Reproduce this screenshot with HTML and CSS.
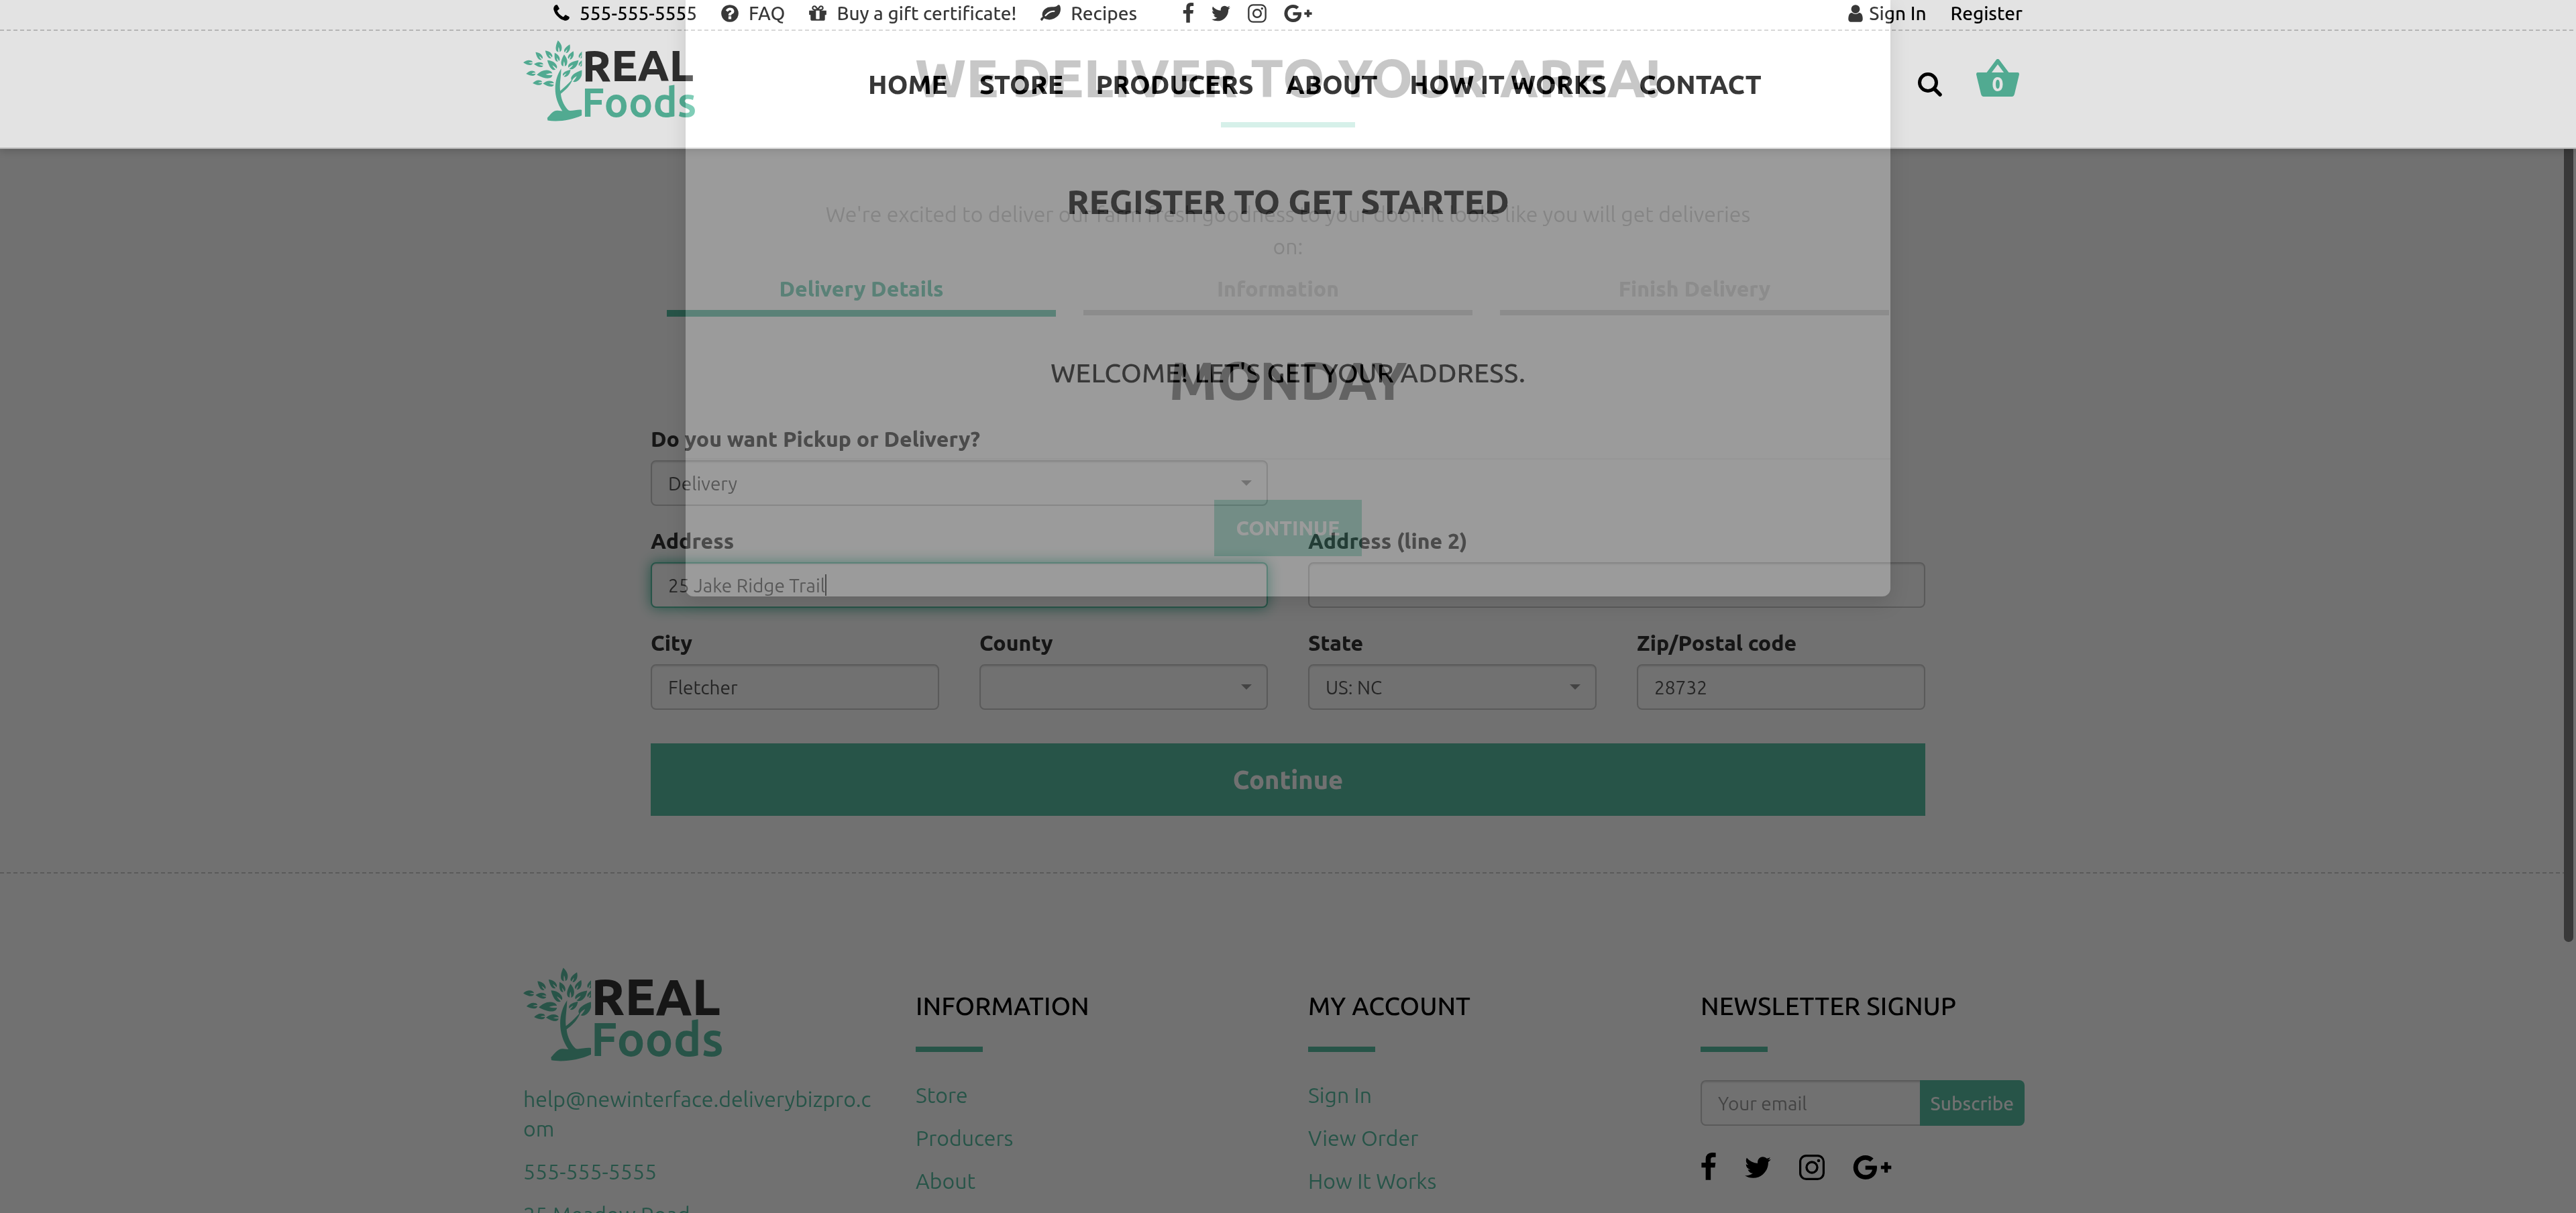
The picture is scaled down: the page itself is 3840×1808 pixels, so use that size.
FILE: index.html
```html
<!DOCTYPE html>
<html lang="en">
<head>
<meta charset="utf-8">
<meta name="viewport" content="width=device-width, initial-scale=1">
<title>Register - Real Foods</title>
<link rel="stylesheet" href="styles.css">
</head>
<body>
<svg class="sprite" aria-hidden="true">
  <defs>
    <path id="leaf-shape" d="M0-30C14-14 21 4 13 22C10 27 7 29 3 30C4 21 3 13 0 4C-3 13-4 21-3 30C-19 27-20 4 0-30Z"/>
    <clipPath id="tree-clip"><rect x="0" y="0" width="315" height="450"/></clipPath>
    <symbol id="logo" viewBox="12 16 888 420">
      <g class="logo-green" clip-path="url(#tree-clip)">
        <use href="#leaf-shape" transform="translate(194 47) rotate(-6)"/>
        <use href="#leaf-shape" transform="translate(241 59) rotate(28) scale(.8)"/>
        <use href="#leaf-shape" transform="translate(92 96) rotate(-42) scale(.82)"/>
        <use href="#leaf-shape" transform="translate(142 88) rotate(-42) scale(.82)"/>
        <use href="#leaf-shape" transform="translate(184 103) rotate(-24) scale(.8)"/>
        <use href="#leaf-shape" transform="translate(260 93) rotate(28) scale(.78)"/>
        <use href="#leaf-shape" transform="translate(223 120) scale(1.02)"/>
        <use href="#leaf-shape" transform="translate(36 132) rotate(-88) scale(.8)"/>
        <use href="#leaf-shape" transform="translate(91 142) rotate(-84) scale(.8)"/>
        <use href="#leaf-shape" transform="translate(159 142) rotate(-45) scale(1.08)"/>
        <use href="#leaf-shape" transform="translate(273 140) rotate(50) scale(1.08)"/>
        <use href="#leaf-shape" transform="translate(51 188) rotate(-94) scale(.82)"/>
        <use href="#leaf-shape" transform="translate(122 193) rotate(-92) scale(1.35)"/>
        <use href="#leaf-shape" transform="translate(238 185) rotate(48) scale(.82)"/>
        <use href="#leaf-shape" transform="translate(292 198) rotate(42) scale(1.3)"/>
        <use href="#leaf-shape" transform="translate(85 236) rotate(-94) scale(.82)"/>
        <use href="#leaf-shape" transform="translate(142 241) rotate(-88) scale(.95)"/>
        <use href="#leaf-shape" transform="translate(314 88) rotate(24) scale(.75)"/>
        <use href="#leaf-shape" transform="translate(314 132) rotate(30) scale(.7)"/>
        <path d="M136 418C152 402 166 378 190 380L214 382C164 310 168 222 208 163C208 205 198 240 203 278C226 260 246 240 268 216C256 252 228 276 206 293C208 325 226 362 248 380C272 382 298 372 315 377V405C262 430 190 440 138 431Z"/>
      </g>
      <text class="logo-real" x="316" y="229">REAL</text>
      <text class="logo-foods" x="314" y="411">Foods</text>
    </symbol>
    <symbol id="facebook" viewBox="479 0 864 1792"><path d="M1343 12v264h-157q-86 0-116 36t-30 108v189h293l-39 296h-254v759h-306v-759h-255v-296h255v-218q0-186 104-288.5t277-102.5q147 0 228 12z"/></symbol>
    <symbol id="twitter" viewBox="108 0 1576 1792"><path d="M1684 408q-67 98-162 167 1 14 1 42 0 130-38 259.5t-115.5 248.5-184.5 210.5-258 146-323 54.5q-271 0-496-145 35 4 78 4 225 0 401-138-105-2-188-64.5t-114-159.5q33 5 61 5 43 0 85-11-112-23-185.5-111.5t-73.5-205.5v-4q68 38 146 41-66-44-105-115t-39-154q0-88 44-163 121 149 294.5 238.5t371.5 99.5q-8-38-8-74 0-134 94.5-228.5t228.5-94.5q140 0 236 102 109-21 205-78-37 115-142 178 93-10 186-50z"/></symbol>
    <symbol id="instagram" viewBox="0 0 38 44"><rect x="1.600" y="4.600" width="34.800" height="34.800" rx="9" fill="none" stroke="currentColor" stroke-width="3.200"/><circle cx="19" cy="22" r="8" fill="none" stroke="currentColor" stroke-width="3.400"/><circle cx="29" cy="12" r="2.300"/></symbol>
    <symbol id="google-plus" viewBox="0 0 2304 1792"><path d="M1437 913q0 208-87 370.5t-248 254-369 91.5q-149 0-285-58t-234-156-156-234-58-285 58-285 156-234 234-156 285-58q286 0 491 192l-199 191q-117-113-292-113-123 0-227.500 62t-165.500 168.500-61 232.500 61 232.500 165.500 168.500 227.500 62q83 0 152.500-23t114.500-57.500 78.500-78.500 49-83 21.500-74h-416v-252h692q12 63 12 122zm867-122v210h-209v209h-210v-209h-209v-210h209v-209h210v209h209z"/></symbol>
  </defs>
</svg>

<div class="page">
  <main class="register">
    <h1>REGISTER TO GET STARTED</h1>
    <ol class="steps">
      <li class="active">Delivery Details</li>
      <li>Information</li>
      <li>Finish Delivery</li>
    </ol>
    <h2>WELCOME! LET'S GET YOUR ADDRESS.</h2>
    <form class="address-form">
      <div class="field half">
        <label for="method">Do you want Pickup or Delivery?</label>
        <div class="select-box"><select id="method"><option>Delivery</option><option>Pickup</option></select></div>
      </div>
      <div class="field half first">
        <label for="address">Address</label>
        <div class="input-box"><input id="address" class="focused" type="text" value="25 Jake Ridge Trail"><span class="text-cursor"></span></div>
      </div>
      <div class="field half">
        <label for="address2">Address (line 2)</label>
        <input id="address2" type="text">
      </div>
      <div class="field">
        <label for="city">City</label>
        <input id="city" type="text" value="Fletcher">
      </div>
      <div class="field">
        <label for="county">County</label>
        <div class="select-box"><select id="county"><option></option></select></div>
      </div>
      <div class="field">
        <label for="state">State</label>
        <div class="select-box"><select id="state"><option>US: NC</option></select></div>
      </div>
      <div class="field">
        <label for="zip">Zip/Postal code</label>
        <input id="zip" type="text" value="28732">
      </div>
      <button class="continue" type="submit">Continue</button>
    </form>
  </main>

  <footer class="site-footer">
    <div class="dashes"></div>
    <div class="container footer-columns">
      <section>
        <svg class="footer-logo" role="img" aria-label="Real Foods"><use href="#logo"/></svg>
        <p><a href="#">help@newinterface.deliverybizpro.com</a></p>
        <p><a href="#">555-555-5555</a></p>
        <p><a href="#">25 Meadow Road</a></p>
      </section>
      <section>
        <h3>INFORMATION</h3>
        <ul class="links">
          <li><a href="#">Store</a></li>
          <li><a href="#">Producers</a></li>
          <li><a href="#">About</a></li>
        </ul>
      </section>
      <section>
        <h3>MY ACCOUNT</h3>
        <ul class="links">
          <li><a href="#">Sign In</a></li>
          <li><a href="#">View Order</a></li>
          <li><a href="#">How It Works</a></li>
        </ul>
      </section>
      <section>
        <h3>NEWSLETTER SIGNUP</h3>
        <form class="newsletter">
          <input type="email" placeholder="Your email" aria-label="Your email">
          <button type="submit">Subscribe</button>
        </form>
        <div class="social large">
          <a href="#" aria-label="Facebook"><svg class="fb"><use href="#facebook"/></svg></a>
          <a href="#" aria-label="Twitter"><svg class="tw"><use href="#twitter"/></svg></a>
          <a href="#" aria-label="Instagram"><svg class="ig"><use href="#instagram"/></svg></a>
          <a href="#" aria-label="Google Plus"><svg class="gp"><use href="#google-plus"/></svg></a>
        </div>
      </section>
    </div>
  </footer>
</div>
<div class="page-dim"></div>
<div class="scrollbar"></div>

<header class="site-header">
  <div class="container top-bar">
    <a href="#"><svg width="24" height="30" viewBox="192 0 1408 1792"><path d="M1600 1240q0 27-10 70.5t-21 68.5q-21 50-122 106-94 51-186 51-27 0-53-3.5t-57.5-12.5-47-14.5-55.5-20.5-49-18q-98-35-175-83-127-79-264-216t-216-264q-48-77-83-175-3-9-18-49t-20.5-55.5-14.5-47-12.5-57.5-3.5-53q0-92 51-186 56-101 106-122 25-11 68.5-21t70.5-10q14 0 21 3 18 6 53 76 11 19 30 54t35 63.5 31 53.5q3 4 17.5 25t21.5 35.5 7 28.5q0 20-28.5 50t-62 55-62 53-28.5 46q0 9 5 22.5t8.5 20.5 14 24 11.5 19q76 137 174 235t235 174q2 1 19 11.5t24 14 20.5 8.5 22.5 5q18 0 46-28.5t53-62 55-62 50-28.5q14 0 28.5 7t35.5 21.5 25 17.5q25 15 53.5 31t63.5 35 54 30q70 35 76 53 3 7 3 21z"/></svg>555-555-5555</a>
    <a href="#"><svg width="26" height="30" viewBox="128 0 1536 1792"><path d="M1024 1376v-192q0-14-9-23t-23-9h-192q-14 0-23 9t-9 23v192q0 14 9 23t23 9h192q14 0 23-9t9-23zm256-672q0-88-55.5-163t-138.5-116-170-41q-243 0-371 213-15 24 8 42l132 100q7 6 19 6 16 0 25-12 53-68 86-92 34-24 86-24 48 0 85.5 26t37.5 59q0 38-20 61t-68 45q-63 28-115.5 86.5t-52.5 125.5v36q0 14 9 23t23 9h192q14 0 23-9t9-23q0-19 21.5-49.5t54.5-49.5q32-18 49-28.5t46-35 44.5-48 28-60.5 12.5-81zm384 192q0 209-103 385.5t-279.5 279.5-385.5 103-385.5-103-279.5-279.5-103-385.5 103-385.5 279.5-279.5 385.5-103 385.5 103 279.5 279.5 103 385.5z"/></svg>FAQ</a>
    <a href="#"><svg width="26" height="30" viewBox="128 0 1536 1792"><path d="M1056 1356v-716h-320v716q0 25 18 38.5t46 13.5h192q28 0 46-13.5t18-38.5zm-456-844h195l-126-161q-26-31-69-31-40 0-68 28t-28 68 28 68 68 28zm688-96q0-40-28-68t-68-28q-43 0-69 31l-125 161h194q40 0 68-28t28-68zm376 256v320q0 14-9 23t-23 9h-96v416q0 40-28 68t-68 28h-1088q-40 0-68-28t-28-68v-416h-96q-14 0-23-9t-9-23v-320q0-14 9-23t23-9h440q-93 0-158.5-65.5t-65.5-158.5 65.5-158.5 158.5-65.5q107 0 168 77l128 165 128-165q61-77 168-77 93 0 158.5 65.5t65.5 158.5-65.5 158.5-158.5 65.5h440q14 0 23 9t9 23z"/></svg>Buy a gift certificate!</a>
    <a href="#"><svg width="30" height="30" viewBox="0 0 1792 1792"><path d="M1280 704q0-26-19-45t-45-19q-172 0-318 49.5t-259.5 134-235.5 219.5q-19 21-19 45 0 26 19 45t45 19q24 0 45-19 27-24 74-71t67-66q137-124 268.5-176t313.5-52q26 0 45-19t19-45zm512-198q0 95-20 193-46 224-184.5 383t-357.5 268q-214 108-438 108-148 0-286-47-15-5-88-42t-96-37q-16 0-39.5 32t-45 70-52.5 70-60 32q-43 0-63.5-17.5t-45.5-59.5q-2-4-6-11t-5.5-10-3-9.500-1.500-13.500q0-35 31-73.500t68-65.500 68-56 31-48q0-4-14-38t-16-44q-9-51-9-104 0-115 43.500-220t119-184.500 170.500-139 204-95.500q55-18 145-25.500t179.500-9 178.500-6 163.500-24 113.500-56.500l29.500-29.500 29.500-28 27-20 36.500-16 43.500-4.500q39 0 70.500 46t47.500 112 24 124 8 96z"/></svg>Recipes</a>
    <div class="social small">
      <a href="#" aria-label="Facebook"><svg class="fb"><use href="#facebook"/></svg></a>
      <a href="#" aria-label="Twitter"><svg class="tw"><use href="#twitter"/></svg></a>
      <a href="#" aria-label="Instagram"><svg class="ig"><use href="#instagram"/></svg></a>
      <a href="#" aria-label="Google Plus"><svg class="gp"><use href="#google-plus"/></svg></a>
    </div>
    <a class="sign-in" href="#"><svg width="22" height="30" viewBox="256 0 1280 1792"><path d="M1536 1399q0 109-62.5 187t-150.5 78h-854q-88 0-150.5-78t-62.5-187q0-85 8.500-160.500t31.500-152 58.500-131 94-89 134.500-34.500q131 128 313 128t313-128q76 0 134.500 34.500t94 89 58.500 131 31.500 152 8.500 160.500zm-256-887q0 159-112.500 271.500t-271.500 112.500-271.500-112.500-112.500-271.500 112.500-271.500 271.500-112.500 271.500 112.500 112.500 271.500z"/></svg>Sign In</a>
    <a href="#">Register</a>
  </div>
  <div class="dashes"></div>
  <div class="container main-bar">
    <a href="#" aria-label="Real Foods"><svg class="header-logo"><use href="#logo"/></svg></a>
    <nav class="main-nav">
      <a href="#">HOME</a>
      <a href="#">STORE</a>
      <a href="#">PRODUCERS</a>
      <a href="#">ABOUT</a>
      <a href="#">HOW IT WORKS</a>
      <a href="#">CONTACT</a>
    </nav>
    <button class="search" type="button" aria-label="Search"><svg width="36" height="36" viewBox="0 0 36 36"><g fill="none" stroke="currentColor"><circle cx="15" cy="15" r="12.500" stroke-width="5"/><path d="M25 25l8 8" stroke-width="5.500" stroke-linecap="round"/></g></svg></button>
    <a class="basket" href="#" aria-label="Basket"><svg width="64" height="56" viewBox="0 0 64 56"><path d="M17 23L32 3L47 23" fill="none" stroke="currentColor" stroke-width="6" stroke-linejoin="round"/><path d="M2 20H62Q64 20 64 23L57 52Q56 56 53 56H11Q8 56 7 52L0 23Q0 20 2 20Z"/><text x="32" y="48">0</text></svg></a>
  </div>
</header>
<div class="modal-backdrop"></div>

<div class="modal">
  <div class="modal-dialog" role="dialog" aria-labelledby="modal-title">
    <div class="modal-content">
      <div class="modal-body">
        <h4 id="modal-title">WE DELIVER TO YOUR AREA!</h4>
        <hr>
        <p>We're excited to deliver our farm fresh goodness to your door! It looks like you will get deliveries on:</p>
        <h4>MONDAY</h4>
      </div>
      <div class="modal-footer"><button type="button">CONTINUE</button></div>
    </div>
  </div>
</div>
</body>
</html>
```
FILE: styles.css
```css
:root {
  --green: #58bea3;
  --line: #ccc;
  --light: 400;
  --regular: 500;
  --bold: 800;
}

* { box-sizing: border-box; }

html, body { height: 100%; }

body {
  position: relative;
  margin: 0;
  overflow: hidden;
  background: #fff;
  color: #000;
  font-family: Ubuntu, "Open Sans", "Noto Sans", sans-serif;
  font-size: 32px;
  font-weight: var(--light);
  line-height: 44px;
}

a { color: inherit; text-decoration: none; }
h1, h2, h3, h4, p, ul, ol { margin: 0; padding: 0; }
ul, ol { list-style: none; }
svg { display: block; fill: currentColor; }
button, input, select { font-family: inherit; border-radius: 0; }
button { border: 0; padding: 0; cursor: pointer; }

.sprite { position: absolute; width: 0; height: 0; }

.container {
  max-width: 2340px;
  margin: 0 auto;
  padding: 0 30px;
}

.dashes {
  height: 2px;
  background: repeating-linear-gradient(90deg, var(--line) 0 6px, transparent 6px 10px);
}

/* Logo */
.logo-green { fill: #5cbfa3; }
.logo-real { fill: #333; font-size: 226px; font-weight: var(--bold); }
.logo-foods { fill: #5cbfa3; font-size: 210px; font-weight: 700; }
.header-logo { width: 256px; height: 121px; }
.footer-logo { width: 296px; height: 140px; margin-bottom: 34px; }

/* Page */
.page { height: 100%; overflow: hidden; }

.register {
  max-width: 1960px;
  margin: 0 auto;
  padding: 270px 30px 84px;
}

.register h1 {
  font-size: 50px;
  font-weight: var(--bold);
  line-height: 60px;
  text-align: center;
}

.register h2 {
  margin: 60px 0 52px;
  font-size: 40px;
  font-weight: var(--regular);
  line-height: 48px;
  text-align: center;
}

.steps {
  display: grid;
  grid-template-columns: repeat(3, 1fr);
  gap: 41px;
  height: 64px;
  margin: 78px 54px 0 24px;
  color: #d9d9d9;
  font-weight: var(--bold);
  text-align: center;
  align-items: start;
}

.steps li { padding-bottom: 10px; border-bottom: 8px solid; }
.steps .active { color: var(--green); border-bottom-width: 10px; }

.address-form {
  display: grid;
  grid-template-columns: repeat(4, 1fr);
  gap: 30px 60px;
}

.field { display: flex; flex-direction: column; gap: 10px; }
.half { grid-column: span 2; }
.first { grid-column: 1 / span 2; }

.field label { color: #333; font-weight: var(--bold); }

.field input,
.field select {
  appearance: none;
  width: 100%;
  height: 68px;
  padding: 0 24px;
  border: 2px solid var(--line);
  border-radius: 8px;
  outline: 0;
  background: #fff;
  box-shadow: inset 0 2px 2px rgba(0, 0, 0, .075);
  color: #555;
  font-size: 28px;
  font-weight: var(--light);
}

.field .focused {
  border-color: var(--green);
  box-shadow: inset 0 2px 2px rgba(0, 0, 0, .075), 0 0 20px rgba(60, 180, 150, .9);
}

.select-box, .input-box { position: relative; }

.select-box::after {
  content: "";
  position: absolute;
  top: 30px;
  right: 24px;
  border: 8px solid transparent;
  border-top-color: #999;
  border-bottom: 0;
}

.text-cursor {
  position: absolute;
  top: 18px;
  left: 260px;
  width: 2px;
  height: 32px;
  background: #333;
}

.continue {
  grid-column: 1 / -1;
  height: 108px;
  margin-top: 20px;
  background: var(--green);
  color: #fff;
  font-size: 38px;
  font-weight: var(--bold);
}

/* Footer */
.footer-columns {
  display: grid;
  grid-template-columns: repeat(4, 1fr);
  gap: 60px;
  padding-top: 140px;
}

.footer-columns section { min-width: 0; }

.footer-columns p {
  margin-bottom: 20px;
  color: var(--green);
  overflow-wrap: anywhere;
}

.footer-columns h3 {
  margin: 35px 0 42px;
  font-size: 38px;
  font-weight: var(--regular);
}

.footer-columns h3::after {
  content: "";
  display: block;
  width: 100px;
  height: 8px;
  margin-top: 39px;
  background: var(--green);
}

.links { display: grid; gap: 20px; color: var(--green); }

.newsletter { display: flex; max-width: 483px; margin-bottom: 40px; }

.newsletter input {
  flex: 1;
  min-width: 0;
  height: 68px;
  padding: 0 24px;
  border: 2px solid var(--line);
  border-right: 0;
  border-radius: 8px 0 0 8px;
  box-shadow: inset 0 2px 2px rgba(0, 0, 0, .075);
  font-size: 28px;
  font-weight: var(--light);
}

.newsletter input::placeholder { color: #999; opacity: 1; }

.newsletter button {
  padding: 0 16px;
  border-radius: 0 8px 8px 0;
  background: var(--green);
  color: #fff;
  font-size: 28px;
  font-weight: var(--regular);
}

/* Social icons */
.social { display: flex; }
.small { gap: 26px; margin: 0 auto 0 32px; }
.large { gap: 42px; }
.small svg { height: 32px; }
.large svg { height: 44px; }
.small .fb { width: 17px; }
.small .tw { width: 28px; }
.small .ig { width: 28px; }
.small .gp { width: 42px; }
.large .fb { width: 24px; }
.large .tw { width: 39px; }
.large .ig { width: 38px; }
.large .gp { width: 58px; }

/* Header */
.site-header {
  position: absolute;
  inset: 0 0 auto;
  border-bottom: 2px solid var(--line);
  background: #fff;
  box-shadow: 0 2px 12px rgba(0, 0, 0, .2);
}

.top-bar {
  display: flex;
  align-items: center;
  gap: 36px;
  height: 44px;
  padding: 0 75px 4px;
  font-size: 28px;
  font-weight: var(--regular);
}

.top-bar > a { display: flex; align-items: center; gap: 15px; }
.top-bar > .sign-in { gap: 9px; }

.main-bar { display: flex; height: 174px; padding: 14px 80px 0 30px; }

.main-nav {
  display: flex;
  gap: 48px;
  margin: 44px auto 0 258px;
  font-size: 39px;
  font-weight: var(--bold);
}

.search { height: 36px; margin-top: 48px; background: none; color: #000; }
.basket { margin: 28px 0 0 51px; color: #5cbfa3; }
.basket text { fill: #fff; font-size: 30px; font-weight: var(--bold); text-anchor: middle; }

/* Scroll indicator and dimming layers */
.scrollbar {
  position: absolute;
  top: 140px;
  right: 4px;
  width: 14px;
  height: 1264px;
  border-radius: 7px;
  background: #404040;
}

.page-dim,
.modal-backdrop {
  position: absolute;
  inset: 0;
  background: rgba(0, 0, 0, .5);
}

.modal-backdrop { background: rgba(0, 0, 0, .11); }

/* Modal, part way through its fade */
.modal {
  position: absolute;
  inset: 0;
  display: flex;
  justify-content: center;
  align-items: flex-start;
}

.modal-dialog { position: relative; width: 100%; max-width: 1796px; }

.modal-dialog::before {
  content: "";
  position: absolute;
  inset: 0;
  border-radius: 0 0 12px 12px;
  background: rgba(0, 0, 0, .123);
  box-shadow: 0 10px 30px rgba(0, 0, 0, .12);
}

.modal-content {
  border-radius: 0 0 12px 12px;
  background: #fff;
  opacity: .22;
  mix-blend-mode: plus-lighter;
  text-align: center;
}

.modal-body { padding: 70px 200px 72px; }

.modal-body h4 { font-size: 80px; font-weight: var(--bold); line-height: 90px; white-space: nowrap; }

.modal-body hr {
  width: 200px;
  height: 8px;
  margin: 22px auto 105px;
  border: 0;
  background: #44bb9b;
}

.modal-body p { margin-bottom: 130px; color: #999; line-height: 48px; }

.modal-footer { padding: 60px; border-top: 2px solid #e5e5e5; }

.modal-footer button {
  height: 84px;
  padding: 0 32px;
  background: #48be9c;
  color: #fff;
  font-size: 30px;
  font-weight: var(--bold);
}
```
